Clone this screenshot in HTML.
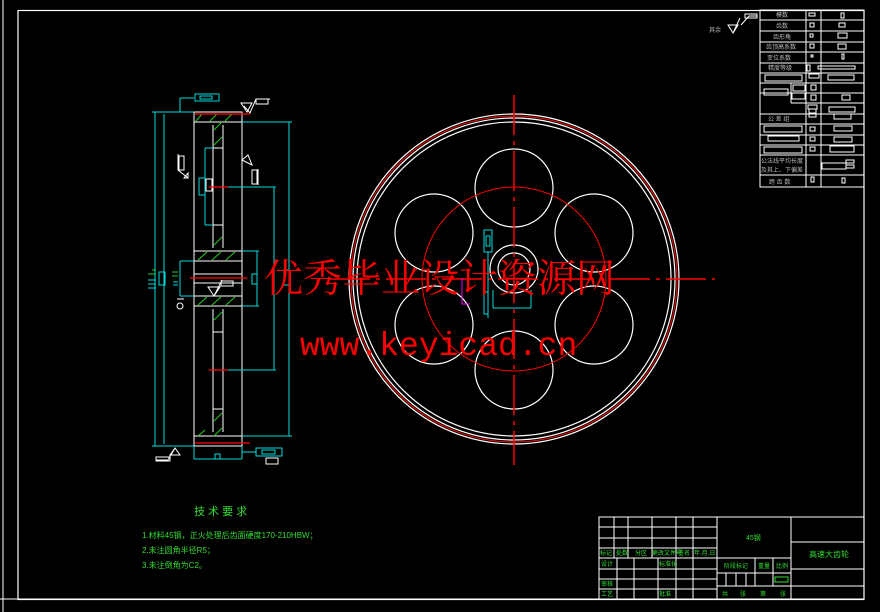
<!DOCTYPE html>
<html><head><meta charset="utf-8"><style>
html,body{margin:0;padding:0;background:#000;}
svg{display:block}
</style></head><body>
<svg width="880" height="612" viewBox="0 0 880 612" xmlns="http://www.w3.org/2000/svg">
<rect width="880" height="612" fill="#000"/>
<line x1="3" y1="0" x2="3" y2="612" stroke="#fff" stroke-width="1"/>
<rect x="18" y="10.5" width="846" height="589" fill="none" stroke="#fff" stroke-width="1.2"/>

<!-- Left view -->
<g fill="none" stroke="#fff" stroke-width="1">
<rect x="194" y="112" width="48" height="334"/>
<line x1="194" y1="122" x2="242" y2="122"/>
<line x1="194" y1="436" x2="242" y2="436"/>
<line x1="213" y1="125" x2="213" y2="248"/>
<line x1="223" y1="125" x2="223" y2="248"/>
<line x1="213" y1="309" x2="213" y2="432"/>
<line x1="223" y1="309" x2="223" y2="432"/>
<line x1="194" y1="251" x2="242" y2="251"/>
<line x1="194" y1="261" x2="242" y2="261"/>
<line x1="194" y1="274" x2="242" y2="274"/>
<line x1="194" y1="283" x2="242" y2="283"/>
<line x1="194" y1="296" x2="242" y2="296"/>
<line x1="194" y1="306" x2="242" y2="306"/>
<line x1="213" y1="148" x2="223" y2="148"/>
<line x1="213" y1="225" x2="223" y2="225"/>
<line x1="213" y1="332" x2="223" y2="332"/>
<line x1="213" y1="409" x2="223" y2="409"/>
<rect x="206" y="179" width="6" height="12"/>
<rect x="221" y="281" width="12" height="5"/>
</g>
<g stroke="#2c2" stroke-width="1">
<line x1="196" y1="121" x2="202" y2="114"/><line x1="210" y1="121" x2="217" y2="114"/><line x1="225" y1="121" x2="232" y2="114"/>
<line x1="214" y1="130" x2="222" y2="122"/><line x1="214" y1="145" x2="222" y2="137"/>
<line x1="214" y1="245" x2="222" y2="237"/>
<line x1="198" y1="260" x2="207" y2="252"/><line x1="212" y1="260" x2="221" y2="252"/><line x1="226" y1="260" x2="235" y2="252"/>
<line x1="198" y1="305" x2="207" y2="297"/><line x1="212" y1="305" x2="221" y2="297"/><line x1="226" y1="305" x2="235" y2="297"/>
<line x1="214" y1="320" x2="222" y2="312"/><line x1="214" y1="421" x2="222" y2="413"/>
<line x1="198" y1="436" x2="205" y2="430"/><line x1="214" y1="436" x2="222" y2="428"/>
</g>
<g fill="none" stroke="#0dd" stroke-width="1">
<line x1="155" y1="112" x2="155" y2="446"/><line x1="164" y1="114" x2="164" y2="444"/>
<line x1="152" y1="112" x2="194" y2="112"/><line x1="152" y1="446" x2="194" y2="446"/>
<line x1="242" y1="122" x2="292" y2="122"/><line x1="242" y1="436" x2="292" y2="436"/>
<line x1="289" y1="122" x2="289" y2="436"/>
<line x1="228" y1="187" x2="276" y2="187"/><line x1="228" y1="370" x2="276" y2="370"/>
<line x1="274" y1="187" x2="274" y2="370"/>
<line x1="242" y1="251" x2="259" y2="251"/><line x1="242" y1="306" x2="259" y2="306"/>
<line x1="257" y1="251" x2="257" y2="306"/>
<line x1="205" y1="148" x2="205" y2="225"/><line x1="205" y1="148" x2="213" y2="148"/><line x1="205" y1="225" x2="213" y2="225"/>
<line x1="180" y1="261" x2="180" y2="296"/><line x1="180" y1="261" x2="194" y2="261"/><line x1="180" y1="296" x2="194" y2="296"/>
<rect x="199" y="178" width="6" height="17"/>
<rect x="159" y="272" width="6" height="13"/>
<rect x="252" y="274" width="5" height="10"/>
<rect x="284" y="270" width="5" height="15"/>
<line x1="180" y1="112" x2="180" y2="98"/><line x1="180" y1="98" x2="194" y2="98"/>
<rect x="195" y="94" width="24" height="7"/><rect x="200" y="96" width="12" height="3"/>
<line x1="242" y1="452" x2="256" y2="452"/><line x1="242" y1="446" x2="242" y2="452"/>
<rect x="256" y="448" width="26" height="8"/><rect x="262" y="450" width="13" height="4"/>
<line x1="194" y1="446" x2="194" y2="459"/><line x1="242" y1="446" x2="242" y2="459"/>
<line x1="194" y1="459" x2="242" y2="459"/>
<rect x="215" y="454" width="5" height="5"/>
<line x1="148" y1="280" x2="156" y2="280"/><line x1="148" y1="284" x2="156" y2="284"/><line x1="148" y1="288" x2="156" y2="288"/>
<line x1="173" y1="282" x2="178" y2="282"/><line x1="173" y1="285" x2="178" y2="285"/>
</g>
<g stroke="#2c2"><line x1="152" y1="270" x2="156" y2="270"/><line x1="148" y1="274" x2="156" y2="274"/><line x1="172" y1="272" x2="178" y2="272"/><line x1="172" y1="276" x2="178" y2="276"/></g>
<g stroke="#f00" stroke-width="1.2">
<line x1="195" y1="114" x2="250" y2="114"/><line x1="195" y1="443" x2="250" y2="443"/>
<line x1="190" y1="278" x2="247" y2="278"/>
<line x1="209" y1="187" x2="228" y2="187"/><line x1="209" y1="370" x2="228" y2="370"/>
</g>
<g fill="none" stroke="#fff" stroke-width="1">
<path d="M244 106 L250 113 L256 99 L270 99"/><rect x="256" y="99" width="12" height="5"/>
<path d="M241 103 L252 103 L247 112 Z"/>
<rect x="179" y="156" width="5" height="14"/><path d="M178 154 L178 170 L188 178 M188 178 L188 173 L184 178 Z"/>
<rect x="252" y="170" width="5" height="14"/><path d="M258 169 L258 185 M252 165 L242 160 L248 155 Z"/>
<path d="M208 287 L220 287 L214 296 Z M214 296 L222 280"/>
<circle cx="180" cy="306" r="3"/><line x1="177" y1="299" x2="184" y2="299"/>
<path d="M170 455 L180 455 L175 448 Z M175 448 L168 460 L156 460"/><rect x="156" y="457" width="14" height="4"/>
<rect x="266" y="458" width="12" height="6"/>
</g>

<!-- Main view -->
<g fill="none" stroke="#fff" stroke-width="1.2">
<circle cx="514" cy="279" r="165"/>
<circle cx="514" cy="279" r="161"/>
<circle cx="514" cy="279" r="157"/>
<circle cx="514" cy="188" r="39"/>
<circle cx="594" cy="233" r="39"/>
<circle cx="594" cy="325" r="39"/>
<circle cx="514" cy="370" r="39"/>
<circle cx="434" cy="325" r="39"/>
<circle cx="434" cy="233" r="39"/>
<circle cx="514" cy="269" r="24"/>
<circle cx="514" cy="269" r="16"/>
</g>
<g fill="none" stroke="#f00" stroke-width="1">
<circle cx="514" cy="279" r="163"/>
<circle cx="514" cy="279" r="92"/>
</g>
<line x1="514" y1="95" x2="514" y2="465" stroke="#f00" stroke-width="1.5" stroke-dasharray="40 6 4 6"/>
<line x1="330" y1="279" x2="715" y2="279" stroke="#f00" stroke-width="1.5" stroke-dasharray="40 6 4 6"/>
<g fill="none" stroke="#0dd" stroke-width="1">
<rect x="484" y="230" width="8" height="22"/><rect x="486" y="236" width="4" height="10"/>
<line x1="488" y1="252" x2="488" y2="318"/>
<rect x="484" y="292" width="4" height="22"/>
<line x1="493" y1="308" x2="531" y2="308"/><line x1="493" y1="290" x2="493" y2="308"/><line x1="531" y1="290" x2="531" y2="308"/>
</g>
<path d="M462 278 L462 304 L470 304" fill="none" stroke="#e0e" stroke-width="1"/>

<!-- watermark -->
<text x="264" y="292" font-family="'Liberation Serif','Noto Serif CJK SC',serif" font-size="39" fill="#f00">优秀毕业设计资源网</text>
<text x="300" y="355" font-family="'Liberation Mono',monospace" font-size="33" fill="#f00">www.keyicad.cn</text>

<!-- tech req -->
<g font-family="'Liberation Sans','Noto Sans CJK SC',sans-serif" fill="#3d3">
<text x="194" y="515" font-size="11">技 术 要 求</text>
<text x="142" y="538" font-size="8">1.材料45钢，正火处理后齿面硬度170-210HBW；</text>
<text x="142" y="553" font-size="8">2.未注圆角半径R5；</text>
<text x="142" y="568" font-size="8">3.未注倒角为C2。</text>
</g>

<!-- title block -->
<g fill="none" stroke="#fff" stroke-width="1">
<rect x="599" y="517" width="265" height="82"/>
<line x1="717" y1="517" x2="717" y2="599"/>
<line x1="791" y1="517" x2="791" y2="599"/>
<line x1="599" y1="527" x2="717" y2="527"/><line x1="599" y1="538" x2="717" y2="538"/>
<line x1="599" y1="548" x2="717" y2="548"/><line x1="599" y1="558" x2="791" y2="558"/>
<line x1="599" y1="569" x2="717" y2="569"/><line x1="599" y1="579" x2="717" y2="579"/>
<line x1="599" y1="589" x2="717" y2="589"/>
<line x1="614" y1="517" x2="614" y2="558"/><line x1="628" y1="517" x2="628" y2="558"/>
<line x1="652" y1="517" x2="652" y2="558"/><line x1="676" y1="517" x2="676" y2="599"/>
<line x1="693" y1="517" x2="693" y2="599"/>
<line x1="617" y1="558" x2="617" y2="599"/><line x1="634" y1="558" x2="634" y2="599"/><line x1="658" y1="558" x2="658" y2="599"/>
<line x1="791" y1="542" x2="864" y2="542"/><line x1="791" y1="569" x2="864" y2="569"/><line x1="717" y1="586" x2="864" y2="586"/>
<line x1="717" y1="573" x2="791" y2="573"/>
<line x1="755" y1="558" x2="755" y2="586"/><line x1="773" y1="558" x2="773" y2="586"/>
<line x1="726" y1="573" x2="726" y2="586"/><line x1="736" y1="573" x2="736" y2="586"/><line x1="746" y1="573" x2="746" y2="586"/>
<line x1="0" y1="599" x2="599" y2="599"/>
</g>
<rect x="775" y="577" width="13" height="5" fill="none" stroke="#3d3"/>
<g font-family="'Liberation Sans','Noto Sans CJK SC',sans-serif" fill="#3d3" font-size="6">
<text x="746" y="540" font-size="7">45钢</text>
<text x="809" y="557" font-size="8">高速大齿轮</text>
<text x="600" y="555">标记</text><text x="616" y="555">处数</text><text x="635" y="555">分区</text><text x="652" y="555">更改文件号</text><text x="678" y="555">签名</text><text x="694" y="555">年.月.日</text>
<text x="601" y="566">设计</text><text x="659" y="566">标准化</text>
<text x="601" y="586">审核</text><text x="601" y="596">工艺</text><text x="659" y="596">批准</text>
<text x="724" y="568">阶段标记</text><text x="758" y="568">重量</text><text x="776" y="568">比例</text>
<text x="722" y="596">共</text><text x="740" y="596">张</text><text x="760" y="596">第</text><text x="780" y="596">张</text>
</g>

<!-- param table -->
<g fill="none" stroke="#fff" stroke-width="1">
<rect x="760" y="10" width="104" height="177"/>
<line x1="806" y1="10" x2="806" y2="187"/><line x1="821" y1="10" x2="821" y2="187"/>
<line x1="760" y1="20" x2="864" y2="20"/><line x1="760" y1="31" x2="864" y2="31"/>
<line x1="760" y1="42" x2="864" y2="42"/><line x1="760" y1="52" x2="864" y2="52"/>
<line x1="760" y1="63" x2="864" y2="63"/><line x1="760" y1="73" x2="864" y2="73"/>
<line x1="760" y1="83" x2="864" y2="83"/><line x1="760" y1="93" x2="864" y2="93"/>
<line x1="791" y1="103" x2="864" y2="103"/>
<line x1="760" y1="114" x2="864" y2="114"/><line x1="760" y1="124" x2="864" y2="124"/>
<line x1="760" y1="135" x2="864" y2="135"/><line x1="760" y1="145" x2="864" y2="145"/>
<line x1="760" y1="155" x2="864" y2="155"/><line x1="760" y1="175" x2="864" y2="175"/>
<line x1="791" y1="83" x2="791" y2="103"/>
<line x1="806" y1="63" x2="806" y2="73"/>
<rect x="809" y="13" width="6" height="3"/><rect x="841" y="13" width="3" height="5"/>
<rect x="810" y="23" width="4" height="4"/><rect x="839" y="23" width="6" height="4"/>
<rect x="810" y="34" width="3" height="3"/><rect x="838" y="33" width="9" height="5"/>
<rect x="810" y="44" width="4" height="4"/><rect x="838" y="44" width="8" height="5"/>
<rect x="811" y="55" width="2" height="2"/><rect x="842" y="54" width="2" height="5"/>
<rect x="807" y="65" width="3" height="6"/><rect x="818" y="66" width="37" height="3"/>
<rect x="765" y="75" width="37" height="6"/><rect x="809" y="74" width="10" height="4"/><rect x="828" y="75" width="26" height="5"/>
<rect x="764" y="89" width="24" height="6"/><rect x="793" y="85" width="12" height="6"/><rect x="792" y="93" width="13" height="6"/>
<rect x="811" y="85" width="5" height="5"/><rect x="811" y="95" width="5" height="5"/><rect x="842" y="95" width="8" height="5"/>
<rect x="808" y="105" width="9" height="4"/><rect x="809" y="109" width="7" height="4"/><rect x="809" y="113" width="7" height="4"/>
<rect x="829" y="107" width="26" height="5"/><rect x="834" y="114" width="17" height="5"/>
<rect x="764" y="126" width="38" height="6"/><rect x="810" y="127" width="5" height="4"/><rect x="834" y="126" width="18" height="5"/>
<rect x="768" y="136" width="31" height="5"/><rect x="810" y="137" width="5" height="4"/><rect x="834" y="137" width="18" height="5"/>
<rect x="764" y="147" width="38" height="6"/><rect x="810" y="147" width="5" height="4"/><rect x="830" y="146" width="24" height="6"/>
<rect x="822" y="163" width="24" height="6"/><rect x="846" y="160" width="8" height="3"/><rect x="846" y="165" width="8" height="3"/>
<rect x="811" y="177" width="3" height="5"/><rect x="842" y="178" width="3" height="5"/>
<line x1="741" y1="25" x2="749" y2="16"/><line x1="749" y1="16" x2="757" y2="16"/><rect x="745" y="14" width="12" height="4"/>
<path d="M728 25 L738 25 L733 33 Z M733 33 L740 18"/>
</g>
<g font-family="'Liberation Sans','Noto Sans CJK SC',sans-serif" fill="#bbb" font-size="6">
<text x="776" y="17">模数</text><text x="776" y="28">齿数</text><text x="773" y="39">齿形角</text>
<text x="766" y="49">齿顶高系数</text><text x="767" y="60">变位系数</text><text x="768" y="70">精度等级</text>
<text x="768" y="121">公 差 组</text>
<text x="761" y="163">公法线平均长度</text><text x="761" y="172">及其上、下偏差</text>
<text x="769" y="184">跨 齿 数</text>
<text x="709" y="32">其余</text>
</g>
</svg>
</body></html>
